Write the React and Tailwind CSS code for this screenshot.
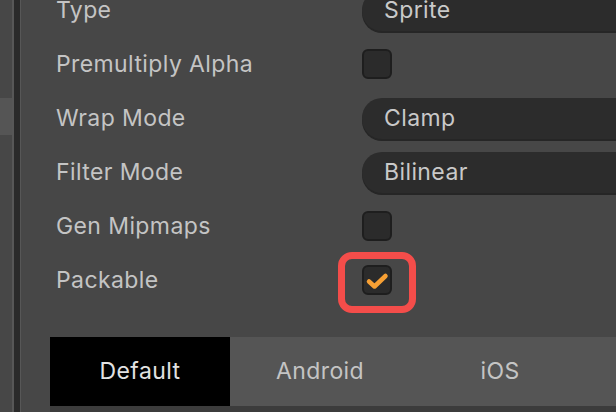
import React from "react";

const font = { fontFamily: "Inter, 'Noto Sans', sans-serif" };

function Field({ value }) {
  return (
    <div className="flex-1 h-[41px] rounded-l-[20px] bg-[#2c2c2c] shadow-[0_2px_0_#262626] flex items-center pl-[22px] text-[23px] tracking-[0.4px] text-[#c9c9c9]">
      {value}
    </div>
  );
}

function Check({ checked }) {
  return (
    <div className="w-[30px] h-[30px] rounded-[6px] bg-[#2b2b2b] border-2 border-[#1e1e1e] flex items-center justify-center">
      {checked && (
        <svg width="26" height="26" viewBox="0 0 26 26">
          <path d="M5 14.5 L10.5 19.5 L21.5 9" fill="none" stroke="#f7a034" strokeWidth="4.5" strokeLinecap="round" strokeLinejoin="round" />
        </svg>
      )}
    </div>
  );
}

function Row({ label, children }) {
  return (
    <div className="h-[54px] flex items-center">
      <div className="w-[306px] text-[23px] tracking-[0.4px] text-[#c4c4c4]">{label}</div>
      <div className="flex-1 flex items-center">{children}</div>
    </div>
  );
}

export default function App() {
  return (
    <div className="w-[616px] h-[412px] overflow-hidden bg-[#474747] flex" style={font}>
      <div className="w-[12px] flex flex-col">
        <div className="h-[98px]" />
        <div className="h-[37px] bg-[#555555]" />
      </div>
      <div className="w-[2px] bg-[#575757]" />
      <div className="w-[6px] bg-[#2a2a2a]" />
      <div className="w-[1px] bg-[#575757]" />
      <div className="flex-1 flex flex-col">
        <div className="-mt-[17px] pl-[35px] flex flex-col">
          <Row label="Type"><Field value="Sprite" /></Row>
          <Row label="Premultiply Alpha"><Check /></Row>
          <Row label="Wrap Mode"><Field value="Clamp" /></Row>
          <Row label="Filter Mode"><Field value="Bilinear" /></Row>
          <Row label="Gen Mipmaps"><Check /></Row>
          <Row label="Packable">
            <div className="relative">
              <Check checked />
              <div className="absolute -left-[24px] -top-[13px] w-[78px] h-[61px] rounded-[14px] border-[7px] border-[#f44d4a]" />
            </div>
          </Row>
        </div>
        <div className="mt-[30px] ml-[29px] h-[70px] bg-[#555555] flex text-[23px] tracking-[0.4px]">
          <div className="w-[180px] bg-black flex items-center justify-center text-[#e2e2e2]">Default</div>
          <div className="w-[180px] flex items-center justify-center text-[#c4c4c4]">Android</div>
          <div className="w-[180px] flex items-center justify-center text-[#c4c4c4]">iOS</div>
        </div>
        <div className="ml-[29px] h-[6px] bg-[#3c3c3c]" />
      </div>
    </div>
  );
}
